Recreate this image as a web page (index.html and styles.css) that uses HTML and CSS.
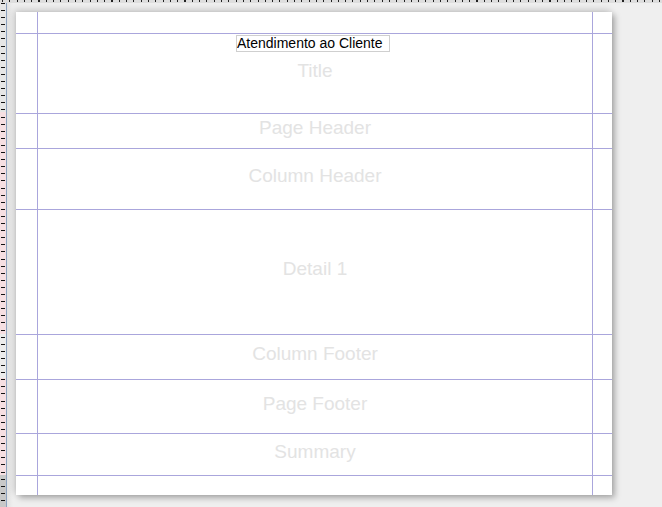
FILE: index.html
```html
<!DOCTYPE html>
<html>
<head>
<meta charset="utf-8">
<link rel="stylesheet" href="styles.css">
</head>
<body>
<div class="designer">
  <div class="ruler-top"></div>
  <div class="ruler-left"></div>
  <div class="canvas">
    <div class="page">
      <div class="band band-margin-top"></div>
      <div class="band band-title">
        <div class="field">Atendimento ao Cliente</div>
        <span class="label">Title</span>
      </div>
      <div class="band band-page-header"><span class="label">Page Header</span></div>
      <div class="band band-col-header"><span class="label">Column Header</span></div>
      <div class="band band-detail"><span class="label">Detail 1</span></div>
      <div class="band band-col-footer"><span class="label">Column Footer</span></div>
      <div class="band band-page-footer"><span class="label">Page Footer</span></div>
      <div class="band band-summary"><span class="label">Summary</span></div>
      <div class="band band-margin-bottom"></div>
    </div>
  </div>
</div>
</body>
</html>
```
FILE: styles.css
```css
html, body {
  margin: 0;
  padding: 0;
}
body {
  background: #efefef;
  font-family: "Liberation Sans", Arial, sans-serif;
  width: 662px;
  height: 507px;
  overflow: hidden;
}
.designer {
  display: grid;
  grid-template-columns: 7px 1fr;
  grid-template-rows: 3px 1fr;
  height: 507px;
}
.ruler-top {
  grid-column: 1 / 3;
  background:
    repeating-linear-gradient(to right, #222 0, #222 1px, transparent 1px, transparent 7.3px) 2px 0 / 100% 2px no-repeat,
    #dedede;
}
.ruler-left {
  background:
    repeating-linear-gradient(to bottom, #111 0, #111 1px, transparent 1px, transparent 7.1px) 1px 0 / 4px 100% no-repeat,
    linear-gradient(to bottom, #e6e6e6 0, #e6e6e6 109px, #f6dfe2 109px, #f6dfe2 331px, #ececec 331px, #ececec 375px, #f6dfe2 375px, #f6dfe2 472px, #c8c8c8 472px);
  border-right: 1px solid #8ca2bf;
  box-sizing: border-box;
}
.canvas {
  padding: 9px 0 0 9px;
  background: linear-gradient(to right, #e2e2e2, #efefef 6px);
}
.page {
  width: 596px;
  height: 483px;
  background:
    linear-gradient(to right, transparent 21px, #aaa6dc 21px, #aaa6dc 22px, transparent 22px, transparent 576px, #aaa6dc 576px, #aaa6dc 577px, transparent 577px),
    #fff;
  box-shadow: 3px 3px 6px rgba(0, 0, 0, 0.28), -2px -2px 7px rgba(0, 0, 0, 0.16);
  display: flex;
  flex-direction: column;
}
.band {
  position: relative;
  border-bottom: 1px solid #aaa6dc;
  display: flex;
  align-items: center;
  justify-content: center;
  padding-left: 21px;
  padding-right: 19px;
  padding-bottom: 6px;
  box-sizing: border-box;
}
.band-margin-top { height: 22px; padding-bottom: 0; }
.band-title { height: 80px; }
.band-page-header { height: 35px; }
.band-col-header { height: 61px; }
.band-detail { height: 125px; }
.band-col-footer { height: 45px; }
.band-page-footer { height: 54px; }
.band-summary { height: 42px; }
.band-margin-bottom { height: 19px; border-bottom: 0; padding-bottom: 0; }
.label {
  font-size: 19px;
  color: #e3e3e3;
  white-space: nowrap;
}
.field {
  position: absolute;
  left: 220px;
  top: 1px;
  width: 154px;
  height: 17px;
  box-sizing: border-box;
  border: 1px solid #cfcfcf;
  background: #fff;
  font-size: 14px;
  line-height: 15px;
  color: #000;
  padding-left: 0;
  white-space: nowrap;
}
```
